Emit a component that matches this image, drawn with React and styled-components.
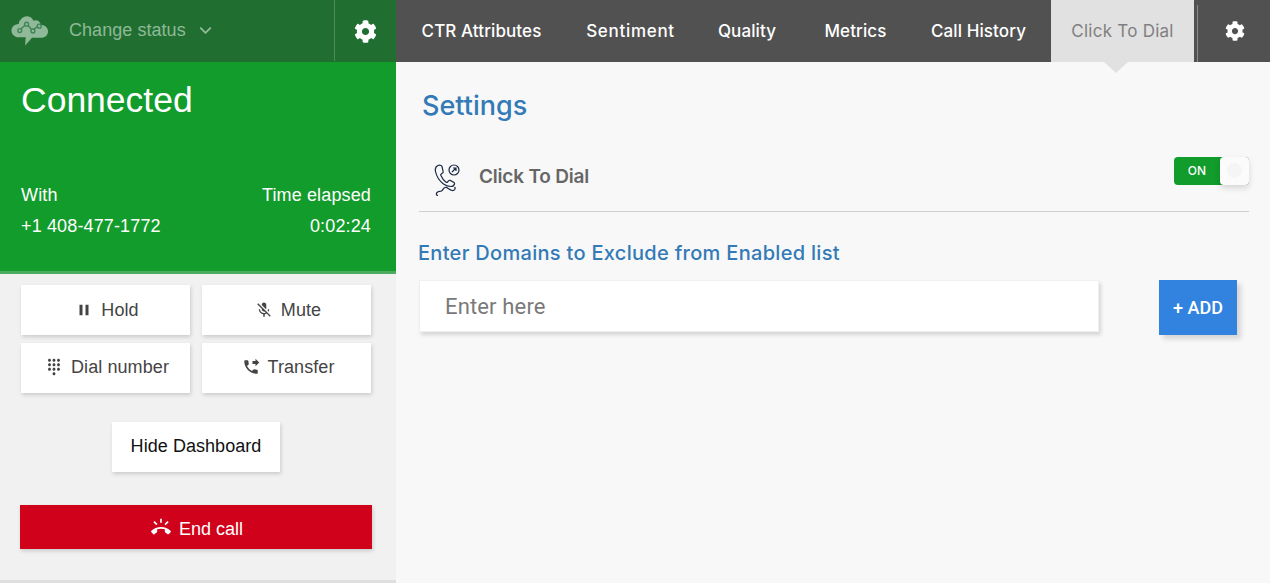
import React from 'react';
import styled, { createGlobalStyle } from 'styled-components';
import { FaCog } from 'react-icons/fa';
import { FiChevronDown } from 'react-icons/fi';
import { MdPause, MdMicOff, MdDialpad, MdPhoneForwarded, MdRingVolume } from 'react-icons/md';

const Global = createGlobalStyle`
  html, body { margin: 0; padding: 0; background: #f8f8f8; overflow: hidden; }
  * { box-sizing: border-box; }
`;

const Page = styled.div`
  display: flex;
  width: 1270px;
  height: 583px;
  font-family: "Liberation Sans", Arial, sans-serif;
`;

const Sidebar = styled.aside`
  width: 396px;
  flex: none;
  display: flex;
  flex-direction: column;
  height: 583px;
`;

const StatusBar = styled.div`
  height: 62px;
  flex: none;
  background: #206f30;
  display: flex;
  align-items: center;
`;

const StatusPicker = styled.div`
  width: 335px;
  height: 61px;
  margin-bottom: 1px;
  padding-left: 11px;
  display: flex;
  align-items: center;
  border-right: 1px solid #4c8c59;
  color: #8fb998;
  font-size: 18px;
`;

const StatusLabel = styled.span`
  margin-left: 20px;
  margin-right: 10px;
  letter-spacing: 0.05px;
`;

const SideGear = styled.div`
  flex: 1;
  display: flex;
  justify-content: center;
  color: #fff;
  font-size: 23px;
`;

const CallCard = styled.section`
  height: 212px;
  flex: none;
  background: #119c2c;
  border-bottom: 3px solid #4dab5e;
  color: #fff;
  padding: 16px 25px 0 21px;
`;

const CallTitle = styled.h1`
  margin: 0 0 63px;
  font-size: 35.5px;
  line-height: 44px;
  font-weight: 400;
`;

const CallRow = styled.div`
  display: flex;
  justify-content: space-between;
  font-size: 18px;
  line-height: 21px;
  margin-bottom: 10px;
  letter-spacing: 0.14px;
`;

const Controls = styled.div`
  flex: 1;
  background: #f1f1f1;
  border-bottom: 3px solid #dfdfdf;
  padding: 11px 25px 0 21px;
  display: flex;
  flex-direction: column;
`;

const ControlGrid = styled.div`
  display: grid;
  grid-template-columns: 169px 169px;
  grid-auto-rows: 50px;
  column-gap: 12px;
  row-gap: 8px;
`;

const ControlButton = styled.button`
  border: 0;
  background: #fff;
  box-shadow: 1px 2px 4px rgba(0, 0, 0, 0.16);
  color: #444;
  font: inherit;
  font-size: 18px;
  letter-spacing: 0.08px;
  display: flex;
  align-items: center;
  justify-content: center;
  gap: 8px;
  padding: 0 0 ${(p) => (p.$lift ? 2 : 0)}px 3px;

  svg {
    font-size: 18px;
    flex: none;
  }
`;

const HideButton = styled.button`
  align-self: center;
  width: 168px;
  height: 50px;
  margin-top: 29px;
  border: 0;
  background: #fff;
  box-shadow: 1px 2px 4px rgba(0, 0, 0, 0.16);
  color: #111;
  font: inherit;
  font-size: 18px;
  letter-spacing: 0.05px;
  padding: 0 0 2px;
`;

const EndCall = styled.button`
  margin: 33px 0 0 -1px;
  width: 352px;
  height: 44px;
  border: 0;
  background: #d0021b;
  box-shadow: 1px 2px 4px rgba(0, 0, 0, 0.16);
  color: #fff;
  font: inherit;
  font-size: 18px;
  display: flex;
  align-items: center;
  justify-content: center;
  gap: 8px;
  padding: 5px 0 0 2px;

  svg {
    font-size: 20px;
    margin-top: -5px;
  }
`;

const Main = styled.main`
  flex: 1;
  display: flex;
  flex-direction: column;
  background: #f8f8f8;
`;

const TabBar = styled.nav`
  height: 62px;
  flex: none;
  background: #515151;
  display: flex;
  padding-left: 3px;
  font-family: Inter, "Noto Sans", sans-serif;
`;

const Tab = styled.div`
  height: 62px;
  width: ${(p) => p.$w}px;
  flex: none;
  display: flex;
  align-items: center;
  justify-content: center;
  font-size: 17px;
  font-weight: 500;
  letter-spacing: ${(p) => p.$track || 0.1}px;
  color: #fff;
`;

const ActiveTab = styled.div`
  height: 62px;
  width: 143px;
  margin-left: 8px;
  flex: none;
  display: flex;
  align-items: center;
  justify-content: center;
  position: relative;
  font-size: 17px;
  letter-spacing: 0.25px;
  color: #808080;
  background: #e1e1e1;

  &::after {
    content: '';
    position: absolute;
    left: 53px;
    top: 62px;
    border-left: 12px solid transparent;
    border-right: 12px solid transparent;
    border-top: 11px solid #e1e1e1;
  }
`;

const TabGear = styled.div`
  flex: 1;
  height: 57px;
  margin: 5px 0 0 3px;
  padding: 0 0 5px 1px;
  border-left: 1px solid #8a8a8a;
  display: flex;
  align-items: center;
  justify-content: center;
  color: #fff;
  font-size: 20px;
`;

const Content = styled.div`
  flex: 1;
  padding: 26px 21px 0 22px;
  font-family: Inter, "Noto Sans", sans-serif;
`;

const Title = styled.h2`
  margin: 0 0 0 4px;
  font-size: 27px;
  line-height: 36px;
  font-weight: 500;
  color: #337ab7;
`;

const SettingRow = styled.div`
  margin: 29px 0 0 1px;
  height: 59px;
  border-bottom: 1px solid #cfcfcf;
  display: flex;
  align-items: center;
  padding: 0 0 12px 15px;
`;

const DialGlyph = styled.svg`
  margin-top: 8px;
  flex: none;
`;

const SettingName = styled.span`
  margin-left: 18px;
  font-size: 19px;
  font-weight: 600;
  color: #666;
  letter-spacing: -0.2px;
  flex: 1;
`;

const Toggle = styled.div`
  width: 75px;
  height: 28px;
  margin-top: -10px;
  display: flex;
  border-radius: 4px;
  background: #119c2c;
  position: relative;
`;

const ToggleLabel = styled.span`
  width: 46px;
  text-align: center;
  line-height: 28px;
  color: #fff;
  font-size: 12px;
  font-weight: 500;
`;

const ToggleKnob = styled.span`
  position: absolute;
  right: 0;
  top: 0;
  width: 29px;
  height: 28px;
  border-radius: 4px;
  background: #fbfbfb;
  box-shadow: 0 3px 6px rgba(0, 0, 0, 0.14);

  &::after {
    content: '';
    position: absolute;
    left: 7px;
    top: 6px;
    width: 15px;
    height: 15px;
    border-radius: 50%;
    background: #f5f5f5;
  }
`;

const SubTitle = styled.h3`
  margin: 28px 0 0 0;
  font-size: 20px;
  line-height: 26px;
  font-weight: 500;
  color: #337ab7;
  letter-spacing: 0.3px;
`;

const AddRow = styled.div`
  display: flex;
  align-items: flex-start;
  margin-top: 14px;
  padding-left: 1px;
`;

const DomainInput = styled.input`
  width: 680px;
  height: 52px;
  border: 1px solid #f0f0f0;
  background: #fff;
  box-shadow: 2px 3px 4px rgba(0, 0, 0, 0.14);
  padding: 0 25px;
  font-family: Roboto, sans-serif;
  font-size: 22px;
  letter-spacing: 0.15px;
  outline: none;

  &::placeholder {
    color: #7a7a7a;
    opacity: 1;
  }
`;

const AddButton = styled.button`
  margin: 0 0 0 60px;
  width: 78px;
  height: 55px;
  border: 0;
  background: #3283e0;
  box-shadow: 4px 4px 5px rgba(0, 0, 0, 0.14);
  color: #fff;
  font-family: Roboto, sans-serif;
  font-weight: 500;
  font-size: 18px;
  padding: 0;
`;

const TABS = [
  { label: 'CTR Attributes', w: 165 },
  { label: 'Sentiment', w: 133, track: 0.7 },
  { label: 'Quality', w: 100 },
  { label: 'Metrics', w: 117 },
  { label: 'Call History', w: 129 },
];

const Logo = () => (
  <svg width="38" height="32" viewBox="0 0 39 32">
    <path
      fill="#8fb998"
      d="M10 4.500C11.500 1.500 16 0 19 1.500c2 .9 3.300 2.200 4 4 2.500-1.400 6-.5 7 2.500 .3.9 .4 1.300.4 1.800 4-.3 7.600 2.400 7.600 6.500 0 4-3 6.700-7 6.700H21.500L14.500 31l.6-8.500H8c-4.500-.2-7.500-3-7.500-7 0-3.500 2.500-6 6-6.500 .5-.1 1-.2 1.500-.2C8 7 8.800 5.500 10 4.500z"
    />
    <g fill="none" stroke="#3f8458" strokeWidth="1.400">
      <path d="M9 15l7-6.500 6 7 7-5.500" />
      <circle cx="9" cy="15.500" r="2" fill="#8fb998" />
      <circle cx="16" cy="9" r="2" fill="#8fb998" />
      <circle cx="22.500" cy="16" r="2" fill="#8fb998" />
      <circle cx="29" cy="11" r="2" fill="#8fb998" />
    </g>
  </svg>
);

const DialIcon = () => (
  <DialGlyph width="27" height="32" viewBox="0 0 27 32" fill="none" stroke="#1d2a44" strokeWidth="1.200">
    <path d="M4 1.500c-2.500 1-3 3.500-2.500 6 1 4.500 4 9.500 8 12.500 2.500 1.800 5 2.500 7.500 2.500 1.800 0 3-1 3.500-2.500.2-.8-.2-1.400-.9-1.800l-3.300-1.800c-.7-.3-1.300-.2-1.800.4l-1 1.200c-.4.4-.9.5-1.400.2-2.200-1.400-4.200-4.400-5.300-7-.2-.6 0-1 .5-1.300l1.200-.8c.6-.4.8-1 .6-1.700L8 2.500C7.500 1.300 5.500.9 4 1.500z" />
    <path d="M20.500 23c1.500 1.500 0 4-2.500 3.500-3-.6-4.500-3.500-7-3-2 .4-1.500 2.500-3.500 3.500-1.500.8-3-.2-4.500 1.500-1.200 1.300-.5 3 1 3.200" />
    <circle cx="20" cy="6" r="5" />
    <path d="M18 8l4-4m-3 0h3v3" />
  </DialGlyph>
);

export default function App() {
  return (
    <Page>
      <Global />
      <Sidebar>
        <StatusBar>
          <StatusPicker>
            <Logo />
            <StatusLabel>Change status</StatusLabel>
            <FiChevronDown size={19} strokeWidth={2.4} />
          </StatusPicker>
          <SideGear>
            <FaCog />
          </SideGear>
        </StatusBar>
        <CallCard>
          <CallTitle>Connected</CallTitle>
          <CallRow>
            <span>With</span>
            <span>Time elapsed</span>
          </CallRow>
          <CallRow>
            <span>+1 408-477-1772</span>
            <span>0:02:24</span>
          </CallRow>
        </CallCard>
        <Controls>
          <ControlGrid>
            <ControlButton>
              <MdPause />
              Hold
            </ControlButton>
            <ControlButton>
              <MdMicOff />
              Mute
            </ControlButton>
            <ControlButton $lift>
              <MdDialpad />
              Dial number
            </ControlButton>
            <ControlButton $lift>
              <MdPhoneForwarded />
              Transfer
            </ControlButton>
          </ControlGrid>
          <HideButton>Hide Dashboard</HideButton>
          <EndCall>
            <MdRingVolume />
            End call
          </EndCall>
        </Controls>
      </Sidebar>
      <Main>
        <TabBar>
          {TABS.map((tab) => (
            <Tab key={tab.label} $w={tab.w} $track={tab.track}>
              {tab.label}
            </Tab>
          ))}
          <ActiveTab>Click To Dial</ActiveTab>
          <TabGear>
            <FaCog />
          </TabGear>
        </TabBar>
        <Content>
          <Title>Settings</Title>
          <SettingRow>
            <DialIcon />
            <SettingName>Click To Dial</SettingName>
            <Toggle>
              <ToggleLabel>ON</ToggleLabel>
              <ToggleKnob />
            </Toggle>
          </SettingRow>
          <SubTitle>Enter Domains to Exclude from Enabled list</SubTitle>
          <AddRow>
            <DomainInput placeholder="Enter here" />
            <AddButton>+ ADD</AddButton>
          </AddRow>
        </Content>
      </Main>
    </Page>
  );
}
